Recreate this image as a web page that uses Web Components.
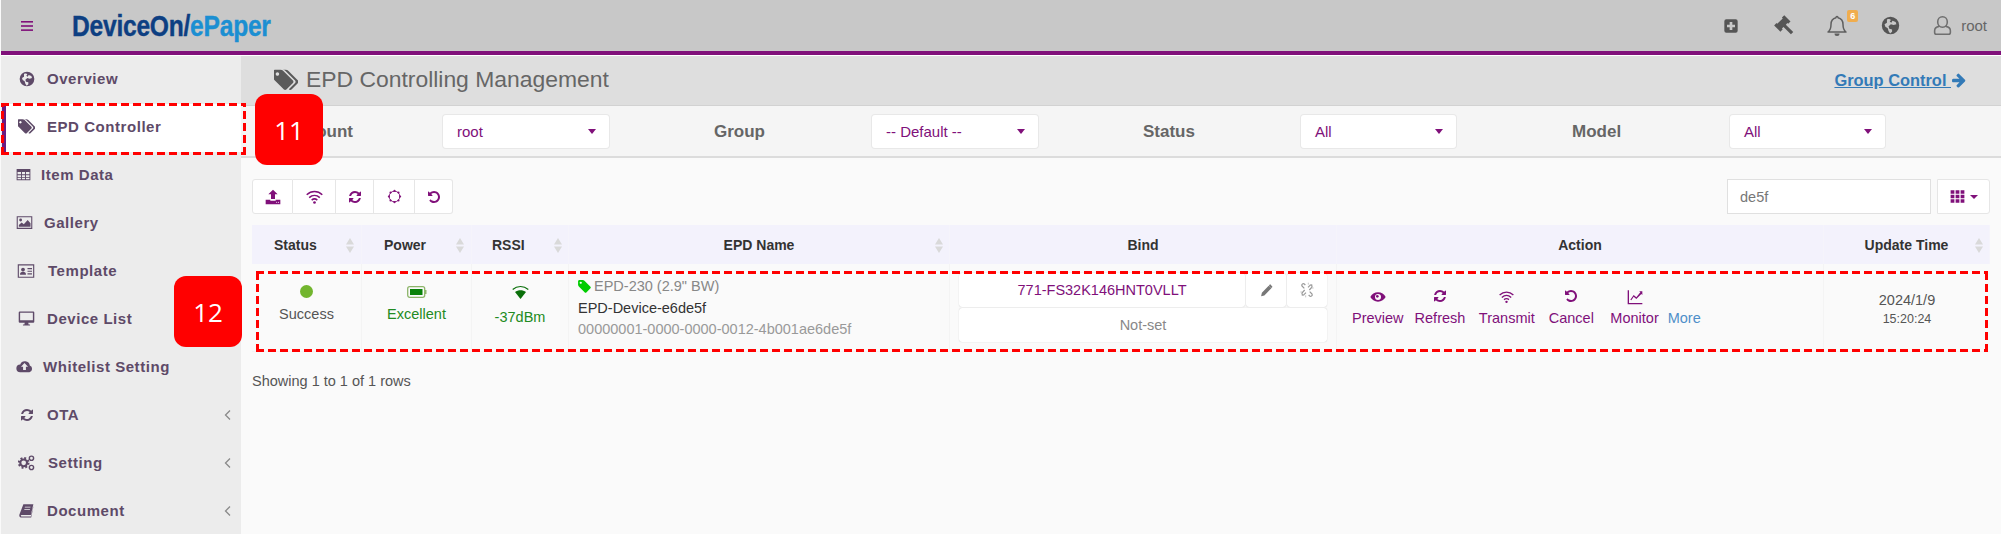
<!DOCTYPE html>
<html>
<head>
<meta charset="utf-8">
<title>EPD Controlling Management</title>
<style>
  html, body { margin: 0; height: 100%; background: #fafafa; }
  body { font-family: "Liberation Sans", Arial, sans-serif; font-size: 14.5px; color: #555; overflow: hidden; }
</style>
</head>
<body>
<epd-app>
  <app-topbar slot="top"></app-topbar>
  <side-nav slot="side">
    <nav-item icon="globe" pad="19" size="16" gap="12">Overview</nav-item>
    <nav-item icon="tags" pad="18" size="17" gap="12" active>EPD Controller</nav-item>
    <nav-item icon="table" pad="16" size="15" gap="10">Item Data</nav-item>
    <nav-item icon="picture" pad="16" size="17" gap="11">Gallery</nav-item>
    <nav-item icon="idcard" pad="17" size="18" gap="13">Template</nav-item>
    <nav-item icon="desktop" pad="18" size="17" gap="12">Device List</nav-item>
    <nav-item icon="cloud" pad="16" size="17" gap="10">Whitelist Setting</nav-item>
    <nav-item icon="refresh" pad="20" size="14" gap="13" more>OTA</nav-item>
    <nav-item icon="cogs" pad="18" size="17" gap="13" more>Setting</nav-item>
    <nav-item icon="book" pad="19" size="15" gap="13" more>Document</nav-item>
  </side-nav>
  <page-head slot="main">EPD Controlling Management</page-head>
  <filter-bar slot="main">
    <filter-select label="Account" w="166">root</filter-select>
    <filter-select label="Group" w="166">-- Default --</filter-select>
    <filter-select label="Status" w="155">All</filter-select>
    <filter-select label="Model" w="155">All</filter-select>
  </filter-bar>
  <table-tools slot="main"></table-tools>
  <epd-table slot="main"></epd-table>
  <call-out slot="over" style="left:255px;top:94px">11</call-out>
  <call-out slot="over" style="left:174px;top:276px">12</call-out>
  <dash-box slot="over" style="left:1px;top:103px;width:245px;height:52px"></dash-box>
  <dash-box slot="over" style="left:256px;top:271px;width:1732px;height:81px"></dash-box>
</epd-app>

<script>
  const PATHS = {
    tag: 'M576 448q0-53-37.5-90.5t-90.5-37.5-90.5 37.5-37.5 90.5 37.5 90.5 90.5 37.5 90.5-37.5 37.5-90.5zm1067 576q0 53-37 90l-491 492q-39 37-91 37-53 0-90-37l-715-716q-38-37-64.5-101t-26.5-117v-416q0-52 38-90t90-38h416q53 0 117 26.5t102 64.5l715 714q37 39 37 91z',
    tags: 'M384 448q0-53-37.5-90.5t-90.5-37.5-90.5 37.5-37.5 90.5 37.5 90.5 90.5 37.5 90.5-37.5 37.5-90.5zm1067 576q0 53-37 90l-491 492q-39 37-91 37-53 0-90-37l-715-716q-38-37-64.5-101t-26.5-117v-416q0-52 38-90t90-38h416q53 0 117 26.5t102 64.5l715 714q37 39 37 91zm384 0q0 53-37 90l-491 492q-38 37-91 37-36 0-59-14t-53-45l470-470q37-37 37-90 0-52-37-91l-715-714q-38-38-102-64.5t-117-26.5h224q53 0 117 26.5t102 64.5l715 714q37 39 37 91z',
    refresh: 'M1639 1056q0 5-1 7-64 268-268 434.5t-478 166.5q-146 0-282.5-55t-243.5-157l-129 129q-19 19-45 19t-45-19-19-45v-448q0-26 19-45t45-19h448q26 0 45 19t19 45-19 45l-137 137q71 66 161 102t187 36q134 0 250-65t186-179q11-17 53-117 8-23 30-23h192q13 0 22.5 9.5t9.5 22.5zm25-800v448q0 26-19 45t-45 19h-448q-26 0-45-19t-19-45 19-45l138-138q-148-137-349-137-134 0-250 65t-186 179q-11 17-53 117-8 23-30 23h-199q-13 0-22.5-9.5t-9.5-22.5v-7q65-268 270-434.5t480-166.5q146 0 284 55.5t245 156.5l130-129q19-19 45-19t45 19 19 45z',
    undo: 'M1664 896q0 156-61 298t-164 245-245 164-298 61q-172 0-327-72.5t-264-204.5q-7-10-6.5-22.5t8.5-20.5l137-138q10-9 25-9 16 2 23 12 73 95 179 147t225 52q104 0 198.5-40.5t163.5-109.5 109.5-163.5 40.5-198.5-40.5-198.5-109.5-163.5-163.5-109.5-198.5-40.5q-98 0-188 35.5t-160 101.5l137 138q31 30 14 69-17 40-59 40h-448q-26 0-45-19t-19-45v-448q0-42 40-59 39-17 69 14l130 129q107-101 244.5-156.5t284.5-55.5q156 0 298 61t245 164 164 245 61 298z',
    arrow: 'M1600 960q0 54-37 91l-651 651q-39 37-91 37-51 0-90-37l-75-75q-38-38-38-91t38-91l293-293h-704q-52 0-90.5-37.5t-38.5-90.5v-128q0-53 38.5-90.5t90.5-37.5h704l-293-294q-38-36-38-90t38-90l75-75q38-38 90-38 53 0 91 38l651 651q37 35 37 90z'
  };

  // small hand drawn ones, all on a 24 box
  const SHAPES = {
    bars: '<rect x="3" y="4.500" width="18" height="2.400"/><rect x="3" y="10.800" width="18" height="2.400"/><rect x="3" y="17" width="18" height="2.400"/>',
    globe: '<path fill-rule="evenodd" d="M12 1a11 11 0 1 0 0 22 11 11 0 0 0 0-22zM7.500 4.500c2.500-1.200 4-.5 5 .5l-1.500 2 2 1.500 1.500-2.500 4 1.500 1 3-3.500 1-3.500-1-3 2.500 1 3 3.500 1 0 3-2.500 2-2-3-1-3.500-3-2-1-3 3-2z"/>',
    table: '<path fill-rule="evenodd" d="M1 3h22v18H1zM2.500 8v3.500H8V8zM9.500 8v3.500h5V8zM16 8v3.500h5.500V8zM2.500 13v2.800H8V13zM9.500 13v2.800h5V13zM16 13v2.800h5.500V13zM2.500 17.300v2.200H8v-2.200zM9.500 17.300v2.200h5v-2.200zM16 17.300v2.200h5.500v-2.200z"/>',
    picture: '<path fill-rule="evenodd" d="M1 3h22v18H1zM2.500 4.500v15h19v-15z"/><circle cx="6.500" cy="8.500" r="2"/><path d="M4 18v-2.500l4-3.500 3 2.500 5.500-6 4 4.500V18z"/>',
    idcard: '<path fill-rule="evenodd" d="M1 3h22v18H1zM2.500 4.500v15h19v-15z"/><circle cx="8" cy="10" r="2.500"/><path d="M4 17c0-3 1.500-4 4-4s4 1 4 4zM14 8h6v1.500h-6zM14 11.500h6V13h-6zM14 15h6v1.500h-6z"/>',
    desktop: '<path fill-rule="evenodd" d="M2.500 2h19A1.500 1.500 0 0 1 23 3.500v13a1.500 1.500 0 0 1-1.500 1.500H14.500l.5 2.500h2V22H7v-1.500h2l.5-2.500H2.500A1.500 1.500 0 0 1 1 16.500v-13A1.500 1.500 0 0 1 2.500 2zM3 4v10.500h18V4z"/>',
    cloud: '<path fill-rule="evenodd" d="M19.500 10.500A7 7 0 0 0 6 9a5.500 5.500 0 0 0 0 11h13a5 5 0 0 0 .5-9.500zM12 7l5 5.500h-3V17h-4v-4.500H7z"/>',
    cogs: '<circle cx="8" cy="12.500" r="4.800" fill="none" stroke="currentColor" stroke-width="3"/><circle cx="8" cy="12.500" r="6.800" fill="none" stroke="currentColor" stroke-width="3" stroke-dasharray="2.700 2.640"/><circle cx="19" cy="6" r="3" fill="none" stroke="currentColor" stroke-width="2"/><circle cx="19" cy="19" r="3" fill="none" stroke="currentColor" stroke-width="2"/>',
    book: '<path d="M7 2h16l-4 17H4c-1.500 0-1.500 2.500 0 2.500h15l4-16.500v1l-3.500 17H3C1 23 0 21 .7 18.500z"/><path d="M9.500 6h9l-.4 1.300h-9zM8.700 9.500h9l-.4 1.300h-9z" fill="var(--bg,#ececec)"/>',
    plussq: '<path fill-rule="evenodd" d="M5 2h14a3 3 0 0 1 3 3v14a3 3 0 0 1-3 3H5a3 3 0 0 1-3-3V5a3 3 0 0 1 3-3zM10 6v4H6v4h4v4h4v-4h4v-4h-4V6z"/>',
    gavel: '<path d="M1 11l3-3 1 1 7-7-1-1 3-3 8 8-3 3-1-1-2 2 9.500 9.500-3 3-9.500-9.500-2 2 1 1-3 3z" transform="translate(1.500 2) scale(.85)"/>',
    bell: '<path fill="none" stroke="currentColor" stroke-width="1.500" stroke-linejoin="round" d="M12 2.500a1 1 0 0 1 1 1.200c3.500.7 5 3.500 5 6.800 0 4 1 6 3 7.500H3c2-1.500 3-3.500 3-7.500 0-3.300 1.500-6.100 5-6.800a1 1 0 0 1 1-1.200z"/><path d="M9.500 19.500h5a2.500 2.500 0 0 1-5 0z"/>',
    user: '<path fill="none" stroke="currentColor" stroke-width="1.800" d="M12 2c3.300 0 5.500 2.600 5.500 6s-2.200 6-5.500 6-5.500-2.600-5.500-6 2.200-6 5.500-6zM8 13c-3 .5-5 2-5 5v2c0 1.200.8 2 2 2h14c1.200 0 2-.8 2-2v-2c0-3-2-4.500-5-5"/>',
    upload: '<path d="M12 1l7 7h-4v7H9V8H5zM1 16h7v1.500h8V16h7v7H1z"/><circle cx="17.500" cy="20" r=".8" fill="#fff"/><circle cx="20.300" cy="20" r=".8" fill="#fff"/>',
    wifi: '<g fill="none" stroke="currentColor" stroke-width="2.200"><path d="M1 9.500c6.500-6 15.500-6 22 0"/><path d="M4.500 13.500c4.500-4 10.500-4 15 0"/><path d="M8 17c2.500-2 5.500-2 8 0"/></g><circle cx="12" cy="20.500" r="1.900"/>',
    ring: '<circle cx="12" cy="12" r="8.500" fill="none" stroke="currentColor" stroke-width="1.600"/><g><circle cx="12" cy="3" r="1.700"/><circle cx="12" cy="21" r="1.700"/><circle cx="3" cy="12" r="1.700"/><circle cx="21" cy="12" r="1.700"/><circle cx="5.600" cy="5.600" r="1.700"/><circle cx="18.400" cy="5.600" r="1.700"/><circle cx="5.600" cy="18.400" r="1.700"/><circle cx="18.400" cy="18.400" r="1.700"/></g>',
    eye: '<path fill-rule="evenodd" d="M12 5c5 0 9.500 3 11.500 7-2 4-6.500 7-11.500 7S2.500 16 .5 12C2.500 8 7 5 12 5zM12 7.500a4.500 4.500 0 1 0 0 9 4.500 4.500 0 0 0 0-9z"/><circle cx="11" cy="11" r="2"/>',
    chart: '<path d="M1 2h2v19h20v2H1z"/><path d="M5 16l5-7 4 3.500L20 5l-1.800-1.500H23V9l-1.500-1.500L14 15l-4-3.500-3.500 5.500z"/>',
    pencil: '<path d="M16 3l5 5L8 21l-6 1.500L3.500 16zM18 1l1-.5 4 4.500-.5 1-1.500 1.500L16.500 3z"/>',
    unlink: '<g fill="none" stroke="currentColor" stroke-width="1.800"><path d="M9.500 4.500L8 3C6 1.500 3 4 4.500 6L8 9.500"/><path d="M14.500 19.500L16 21c2 1.500 5-1 3.500-3L16 14.500"/><path d="M8.500 12l-3.500 4c-1.500 2 .5 4.500 2.500 3l3-3"/><path d="M15.500 12l3.500-4c1.500-2-.5-4.500-2.500-3l-3 3"/></g><path d="M14 1v3M20 3l-2 2M22 9h-3M2 15h3M4 21l2-2M10 23v-3" stroke="currentColor" stroke-width=".8" fill="none"/>',
    th: '<path d="M1 2h6v5.500H1zM9 2h6v5.500H9zM17 2h6v5.500h-6zM1 9.200h6v5.500H1zM9 9.200h6v5.500H9zM17 9.200h6v5.500h-6zM1 16.500h6V22H1zM9 16.500h6V22H9zM17 16.500h6V22h-6z"/>'
  };

  class FaIcon extends HTMLElement {
    connectedCallback() {
      const name = this.getAttribute('name');
      const size = this.getAttribute('size') || 14;
      const body = PATHS[name]
        ? `<svg viewBox="0 0 1792 1792" width="${size}" height="${size}"><path d="${PATHS[name]}"/></svg>`
        : `<svg viewBox="0 0 24 24" width="${size}" height="${size}">${SHAPES[name]}</svg>`;
      this.attachShadow({ mode: 'open' }).innerHTML = `
        <style>
          :host { display: inline-flex; flex: none; line-height: 0; }
          svg { fill: currentColor; display: block; }
        </style>${body}`;
    }
  }
  customElements.define('fa-icon', FaIcon);

  class EpdApp extends HTMLElement {
    constructor() {
      super();
      this.attachShadow({ mode: 'open' }).innerHTML = `
        <style>
          :host { display: block; position: relative; width: 2001px; height: 534px; overflow: hidden; }
          .body { display: flex; height: 479px; }
          .main { flex: 1; min-width: 0; }
        </style>
        <slot name="top"></slot>
        <div class="body">
          <slot name="side"></slot>
          <div class="main"><slot name="main"></slot></div>
        </div>
        <slot name="over"></slot>`;
    }
  }
  customElements.define('epd-app', EpdApp);

  class AppTopbar extends HTMLElement {
    constructor() {
      super();
      this.attachShadow({ mode: 'open' }).innerHTML = `
        <style>
          :host { display: flex; align-items: center; height: 51px; margin-left: 1px; background: #c8c8c8; border-bottom: 4px solid #80107a; box-shadow: 0 1px 0 #fff; position: relative; }
          .menu { color: #80107a; margin-left: 18px; }
          /* no narrow bold installed, so squeeze the logo text */
          .logo { margin-left: 37px; font-size: 30px; font-weight: bold; letter-spacing: -.3px; color: #0d3f82; -webkit-text-stroke: .4px currentColor; transform: scaleX(.82); transform-origin: left center; white-space: nowrap; }
          .logo span { color: #1b8fd2; }
          .right { margin-left: auto; display: flex; align-items: center; color: #555; }
          .bell { position: relative; display: flex; color: #5f5f5f; }
          .badge { position: absolute; left: 22px; top: -4px; width: 11px; height: 12px; border-radius: 2px; background: #f0ad4e; color: #fff; font-size: 9px; font-weight: bold; line-height: 12px; text-align: center; }
          .user { color: #6f6f6f; }
          .name { font-size: 15px; color: #666; margin: 0 14px 0 8px; }
        </style>
        <fa-icon class="menu" name="bars" size="16"></fa-icon>
        <div class="logo">DeviceOn/<span>ePaper</span></div>
        <div class="right">
          <fa-icon name="plussq" size="16"></fa-icon>
          <fa-icon name="gavel" size="22" style="margin-left:33px"></fa-icon>
          <div class="bell" style="margin-left:31px"><fa-icon name="bell" size="24"></fa-icon><span class="badge">6</span></div>
          <fa-icon name="globe" size="19" style="margin-left:32px"></fa-icon>
          <fa-icon class="user" name="user" size="21" style="margin-left:32px"></fa-icon>
          <span class="name">root</span>
        </div>`;
    }
  }
  customElements.define('app-topbar', AppTopbar);

  class SideNav extends HTMLElement {
    constructor() {
      super();
      this.attachShadow({ mode: 'open' }).innerHTML = `
        <style>
          :host { display: block; width: 240px; margin: 1px 0 0 1px; background: #ececec; flex: none; }
        </style>
        <slot></slot>`;
    }
  }
  customElements.define('side-nav', SideNav);

  class NavItem extends HTMLElement {
    connectedCallback() {
      const a = n => this.getAttribute(n);
      this.attachShadow({ mode: 'open' }).innerHTML = `
        <style>
          :host { display: flex; align-items: center; height: 48px; box-sizing: border-box; padding-bottom: 3px; padding-left: ${a('pad') - 1}px; font-size: 15px; font-weight: bold; letter-spacing: .55px; color: #5e4a68; --bg: #ececec; }
          :host([active]) { background: #fff; --bg: #fff; margin-left: 5px; padding-left: ${a('pad') - 6}px; box-shadow: -4px 0 0 #6a1a80; }
          .txt { margin-left: ${a('gap')}px; white-space: nowrap; }
          svg { margin-left: auto; margin-right: 10px; }
        </style>
        <fa-icon name="${a('icon')}" size="${a('size')}"></fa-icon>
        <span class="txt"><slot></slot></span>
        ${this.hasAttribute('more') ? '<svg width="7" height="12" viewBox="0 0 7 12"><path d="M6 1.500L1.500 6 6 10.500" fill="none" stroke="#8a8a8a" stroke-width="1.300"/></svg>' : ''}`;
    }
  }
  customElements.define('nav-item', NavItem);

  class PageHead extends HTMLElement {
    constructor() {
      super();
      this.attachShadow({ mode: 'open' }).innerHTML = `
        <style>
          :host { display: flex; align-items: center; height: 50px; box-sizing: content-box; padding: 0 34px 0 33px; background: #dedede; border-bottom: 1px solid #d2d2d2; color: #666; }
          h1 { margin: 0 0 2px 8px; font-size: 22.900px; font-weight: normal; }
          a { margin-left: auto; color: #337ab7; font-size: 16.400px; font-weight: bold; text-decoration: underline; display: flex; align-items: center; }
          .tags { color: #5a5a5a; }
        </style>
        <fa-icon class="tags" name="tags" size="24"></fa-icon>
        <h1><slot></slot></h1>
        <a href="#">Group Control&nbsp;<fa-icon name="arrow" size="16"></fa-icon></a>`;
    }
  }
  customElements.define('page-head', PageHead);

  class FilterBar extends HTMLElement {
    constructor() {
      super();
      this.attachShadow({ mode: 'open' }).innerHTML = `
        <style>
          :host { display: grid; grid-template-columns: repeat(4, 429px); height: 50px; background: #f5f5f5; border-bottom: 2px solid #dcdcdc; align-items: center; }
        </style>
        <slot></slot>`;
    }
  }
  customElements.define('filter-bar', FilterBar);

  class FilterSelect extends HTMLElement {
    connectedCallback() {
      this.attachShadow({ mode: 'open' }).innerHTML = `
        <style>
          :host { display: flex; align-items: center; padding-left: 44px; }
          label { width: 158px; flex: none; padding-top: 2px; font-size: 17px; font-weight: bold; color: #666; }
          .sel { width: ${this.getAttribute('w')}px; height: 33px; box-sizing: border-box; display: flex; align-items: center; justify-content: space-between; padding: 0 13px 0 14px; background: #fff; border-radius: 3px; box-shadow: 0 0 0 1px #e8e8e8; color: #80107a; font-size: 15px; }
          i { border: 4px solid transparent; border-top: 5px solid #80107a; border-bottom: 0; }
        </style>
        <label>${this.getAttribute('label')}</label>
        <div class="sel"><span><slot></slot></span><i></i></div>`;
    }
  }
  customElements.define('filter-select', FilterSelect);

  class TableTools extends HTMLElement {
    constructor() {
      super();
      const widths = [['upload', 41, 16], ['wifi', 43, 17], ['refresh', 38, 14], ['ring', 41, 15], ['undo', 38, 14]];
      const btns = widths.map(b => `<button style="width:${b[1]}px"><fa-icon name="${b[0]}" size="${b[2]}"></fa-icon></button>`).join('');
      this.attachShadow({ mode: 'open' }).innerHTML = `
        <style>
          :host { display: flex; height: 35px; margin: 21px 11px 11px 11px; color: #80107a; }
          button { height: 35px; padding: 0; margin: 0; display: flex; align-items: center; justify-content: center; background: #fff; color: inherit; border: 1px solid #e6e6e6; border-left-width: 0; }
          button:first-child { border-left-width: 1px; border-radius: 3px 0 0 3px; }
          button:last-child { border-radius: 0 3px 3px 0; }
          .group { display: flex; }
          .search { margin-left: auto; width: 204px; box-sizing: border-box; border: 1px solid #e0e0e0; background: #fff; font: 14.500px "Liberation Sans", Arial, sans-serif; color: #777; padding: 0 12px; display: flex; align-items: center; }
          .cols { width: 53px; margin-left: 6px; gap: 5px; border-left-width: 1px; border-radius: 3px; }
          i { border: 4px solid transparent; border-top: 4px solid #80107a; border-bottom: 0; }
        </style>
        <div class="group">${btns}</div>
        <div class="search">de5f</div>
        <button class="cols"><fa-icon name="th" size="15"></fa-icon><i></i></button>`;
    }
  }
  customElements.define('table-tools', TableTools);

  class ActionLink extends HTMLElement {
    connectedCallback() {
      this.attachShadow({ mode: 'open' }).innerHTML = `
        <style>
          :host { display: flex; flex-direction: column; align-items: center; color: #80107a; font-size: 14.500px; }
          fa-icon { height: 15px; margin-bottom: 6px; }
        </style>
        <fa-icon name="${this.getAttribute('icon')}" size="${this.getAttribute('size') || 14}"></fa-icon>
        <slot></slot>`;
    }
  }
  customElements.define('action-link', ActionLink);

  class SortHead extends HTMLElement {
    connectedCallback() {
      const sort = this.hasAttribute('sort');
      this.attachShadow({ mode: 'open' }).innerHTML = `
        <style>
          :host { display: flex; align-items: center; justify-content: var(--al, center); position: relative; height: 39px; padding-left: var(--pl, 0); background: #f3f2fc; font-weight: bold; color: #333; font-size: 14px; box-sizing: border-box; border-right: 1px solid #f5f4fb; }
          svg { position: absolute; right: var(--sr, 5px); top: 13px; }
        </style>
        <slot></slot>
        ${sort ? '<svg width="8" height="15" viewBox="0 0 8 15"><path d="M4 0l4 6.500H0zM4 15l4-6.500H0z" fill="#d9d9d9"/></svg>' : ''}`;
    }
  }
  customElements.define('sort-head', SortHead);

  class EpdTable extends HTMLElement {
    constructor() {
      super();
      this.attachShadow({ mode: 'open' }).innerHTML = `
        <style>
          :host { display: block; margin: 0 11px; }
          .grid { display: grid; grid-template-columns: 110px 110px 97px 381px 387px 487px 166px; }
          .cell { height: 88px; box-sizing: border-box; border-right: 1px solid #f4f4f4; border-bottom: 1px solid #f4f4f4; padding-top: 21px; display: flex; flex-direction: column; align-items: center; }
          .cell:last-child { border-right: 0; }
          .dot { width: 13px; height: 13px; border-radius: 50%; background: #72b52e; margin-bottom: 8px; }
          .ok { color: #228b22; }
          .batt { margin-bottom: 7px; display: block; }
          .name { align-items: flex-start; padding: 12px 0 0 9px; line-height: 21.500px; }
          .model { color: #888; display: flex; align-items: center; gap: 2px; }
          .model fa-icon { color: #0c0; margin-left: -1px; }
          .dev { color: #333; }
          .uuid { color: #999; }
          .bind { padding: 9px 9px 0; gap: 1px; align-items: stretch; }
          .bind div { display: flex; gap: 1px; height: 34px; }
          .b { background: #fff; border-radius: 3px; box-shadow: 0 0 1px 0 #bbb; display: flex; align-items: center; justify-content: center; }
          .serial { flex: 1; color: #80107a; }
          .ic { width: 40px; color: #777; }
          .ns { flex: 1; color: #888; }
          .act { flex-direction: row; justify-content: flex-start; align-items: flex-start; padding: 25px 0 0 15px; }
          .more { color: #4f8fc9; margin: 21px 0 0 9px; }
          .time { color: #555; padding-top: 28px; padding-left: 0; gap: 4px; }
          .time small { font-size: 12.500px; }
          .foot { margin-top: 21px; color: #555; }
          .wifi { margin-bottom: 10px; display: block; }
        </style>
        <div class="grid">
          <sort-head sort style="--al:flex-start;--pl:22px;--sr:7px">Status</sort-head>
          <sort-head sort style="--al:flex-start;--pl:22px;--sr:7px">Power</sort-head>
          <sort-head sort style="--al:flex-start;--pl:20px;--sr:6px">RSSI</sort-head>
          <sort-head sort style="--sr:6px">EPD Name</sort-head>
          <sort-head>Bind</sort-head>
          <sort-head>Action</sort-head>
          <sort-head sort style="--sr:6px">Update Time</sort-head>

          <div class="cell"><span class="dot"></span><span>Success</span></div>
          <div class="cell ok">
            <svg class="batt" width="20" height="14" viewBox="0 0 20 14"><rect x=".7" y="1.700" width="17" height="10.600" rx="2" fill="none" stroke="#8db56a" stroke-width="1.300"/><rect x="3" y="4" width="12.500" height="6" fill="#0a820a"/><rect x="18" y="5" width="1.500" height="4" fill="#8db56a"/></svg>
            <span>Excellent</span>
          </div>
          <div class="cell ok">
            <svg class="wifi" width="17" height="14" viewBox="0 0 17 14"><path d="M8.500 14L3 7c3.200-2.500 7.800-2.500 11 0z" fill="#0a6f0a"/><path d="M.7 4.500c4.500-4 11-4 15.600 0" fill="none" stroke="#0a6f0a" stroke-width="1.200"/></svg>
            <span>-37dBm</span>
          </div>
          <div class="cell name">
            <span class="model"><fa-icon name="tag" size="15"></fa-icon> EPD-230 (2.9" BW)</span>
            <span class="dev">EPD-Device-e6de5f</span>
            <span class="uuid">00000001-0000-0000-0012-4b001ae6de5f</span>
          </div>
          <div class="cell bind">
            <div>
              <span class="b serial">771-FS32K146HNT0VLLT</span>
              <span class="b ic"><fa-icon name="pencil" size="13"></fa-icon></span>
              <span class="b ic" style="color:#999"><fa-icon name="unlink" size="16"></fa-icon></span>
            </div>
            <div><span class="b ns">Not-set</span></div>
          </div>
          <div class="cell act">
            <action-link icon="eye" size="16">Preview</action-link>
            <action-link icon="refresh" size="14" style="margin-left:11px">Refresh</action-link>
            <action-link icon="wifi" size="15" style="margin-left:13.500px">Transmit</action-link>
            <action-link icon="undo" size="14" style="margin-left:14px">Cancel</action-link>
            <action-link icon="chart" size="16" style="margin-left:16.500px">Monitor</action-link>
            <span class="more">More</span>
          </div>
          <div class="cell time"><span>2024/1/9</span><small>15:20:24</small></div>
        </div>
        <div class="foot">Showing 1 to 1 of 1 rows</div>`;
    }
  }
  customElements.define('epd-table', EpdTable);

  class CallOut extends HTMLElement {
    constructor() {
      super();
      this.attachShadow({ mode: 'open' }).innerHTML = `
        <style>
          :host { position: absolute; width: 68px; height: 71px; display: flex; align-items: center; justify-content: center; background: #f00; border-radius: 12px; color: #fff; font: 26px "Open Sans", sans-serif; }
        </style>
        <slot></slot>`;
    }
  }
  customElements.define('call-out', CallOut);

  class DashBox extends HTMLElement {
    constructor() {
      super();
      const h = 'repeating-linear-gradient(90deg, #f00 0 8px, transparent 8px 12px)';
      const v = 'repeating-linear-gradient(0deg, #f00 0 8px, transparent 8px 12px)';
      this.attachShadow({ mode: 'open' }).innerHTML = `
        <style>
          :host { position: absolute; box-sizing: border-box;
            background: ${h} top left / 100% 3px no-repeat, ${h} bottom left / 100% 3px no-repeat,
                        ${v} top left / 3px 100% no-repeat, ${v} top right / 3px 100% no-repeat; }
        </style>`;
    }
  }
  customElements.define('dash-box', DashBox);
</script>
</body>
</html>
